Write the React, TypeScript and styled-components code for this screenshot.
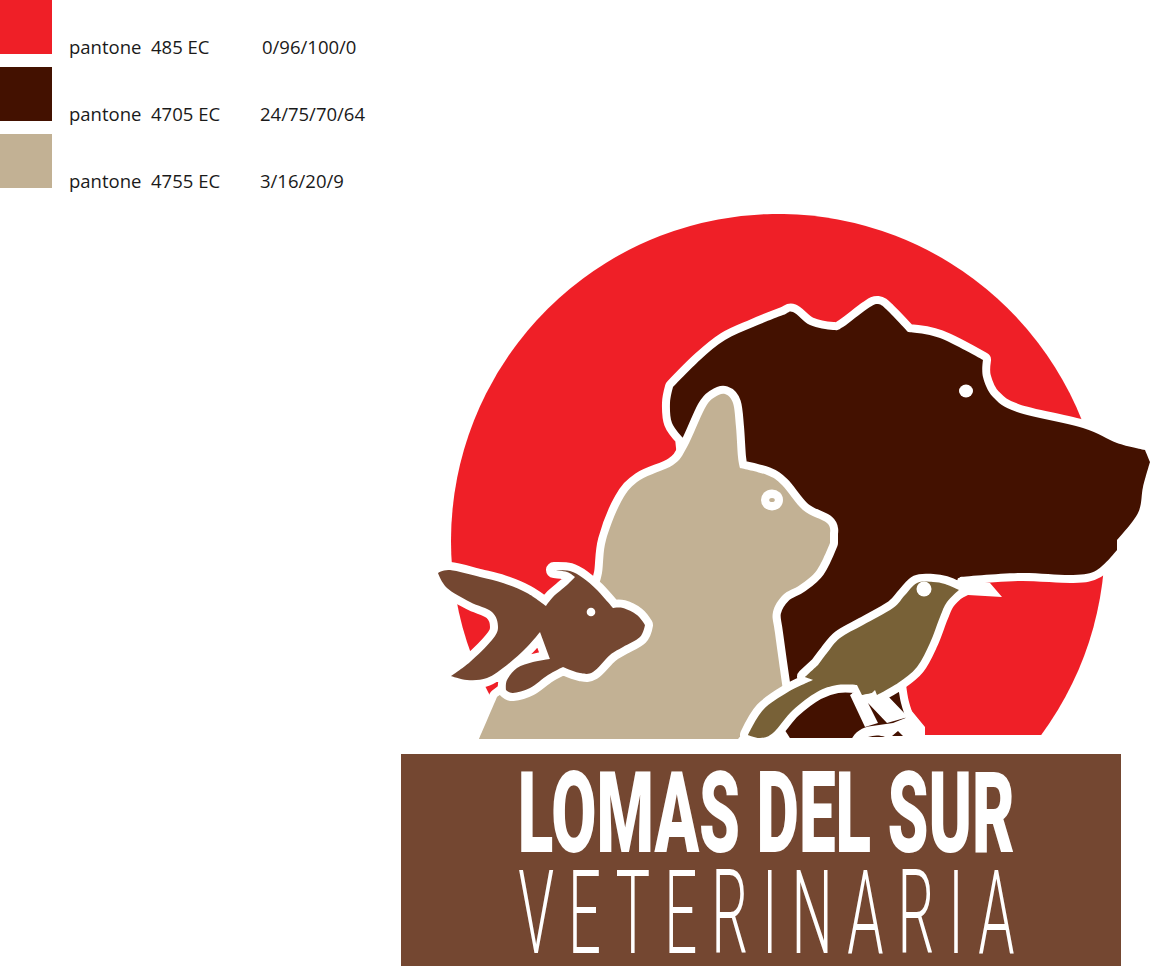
import React from 'react'
import styled, { createGlobalStyle } from 'styled-components'

const GlobalStyle = createGlobalStyle`
  html, body {
    margin: 0;
    padding: 0;
    background: #fff;
  }
`

const Page = styled.div`
  width: 1158px;
  height: 976px;
  overflow: hidden;
  display: flex;
  flex-direction: column;
  font-family: 'Open Sans', 'Noto Sans', sans-serif;
`

const Legend = styled.div`
  display: flex;
  flex-direction: column;
  gap: 13px;
`

const LegendRow = styled.div`
  display: grid;
  grid-template-columns: 52px 174px auto;
  column-gap: 17px;
  align-items: end;
  justify-content: start;
  height: 54px;
`

const Swatch = styled.div<{ $color: string }>`
  height: 54px;
  background: ${({ $color }) => $color};
`

const LegendText = styled.span<{ $indent?: number }>`
  font-size: 18.5px;
  line-height: 20px;
  color: #1a1a1a;
  white-space: pre;
  margin-bottom: -3px;
  margin-left: ${({ $indent }) => ($indent ? $indent : 0)}px;
`

const LogoArt = styled.svg`
  display: block;
  width: 757px;
  height: 526px;
  margin: 26px 0 0 401px;
  flex: none;
`

const Outlined = styled.path<{ $fill: string }>`
  fill: ${({ $fill }) => $fill};
  stroke: #fff;
  stroke-width: 16px;
  stroke-linejoin: round;
  paint-order: stroke;
`

const Banner = styled.div`
  width: 720px;
  height: 212px;
  margin: 14px 0 0 401px;
  flex: none;
  background: #744731;
  color: #fff;
  display: flex;
  flex-direction: column;
  align-items: center;
  overflow: hidden;
`

const BrandName = styled.div`
  font-family: 'Roboto', 'Liberation Sans', sans-serif;
  font-weight: 900;
  font-size: 114px;
  line-height: 82px;
  height: 82px;
  margin-top: 18px;
  white-space: nowrap;
  transform: translateX(5px) scaleX(0.575);
`

const BrandKind = styled.div`
  font-family: 'Roboto', sans-serif;
  font-weight: 300;
  font-size: 116px;
  line-height: 82px;
  height: 82px;
  margin-top: 18px;
  white-space: nowrap;
  letter-spacing: 28px;
  transform: translateX(12px) scaleX(0.5);
`

type Pt = [number, number, number?]

// smooth closed path through points, third value 1 marks a sharp corner
const trace = (pts: Pt[]) => {
  const n = pts.length
  const tan = (i: number) => {
    const p = pts[i]
    if (p[2]) return [0, 0]
    const a = pts[(i - 1 + n) % n]
    const b = pts[(i + 1) % n]
    return [(b[0] - a[0]) / 6, (b[1] - a[1]) / 6]
  }
  let d = `M${pts[0][0]},${pts[0][1]}`
  for (let i = 0; i < n; i++) {
    const j = (i + 1) % n
    const t0 = tan(i)
    const t1 = tan(j)
    d += ` C${pts[i][0] + t0[0]},${pts[i][1] + t0[1]} ${pts[j][0] - t1[0]},${pts[j][1] - t1[1]} ${pts[j][0]},${pts[j][1]}`
  }
  return d + ' Z'
}

const dog: Pt[] = [
  [683, 438, 1], [672, 423], [670, 403], [673, 387, 1], [700, 360], [725, 340], [753, 327], [783, 315],
  [793, 312], [810, 325], [833, 330], [843, 327], [867, 309], [878, 304], [888, 311], [908, 332, 1], [940, 338],
  [983, 360, 1], [983, 377], [993, 397], [1017, 412], [1083, 428], [1117, 443], [1145, 450, 1], [1150, 462, 1],
  [1143, 487], [1138, 513], [1117, 540, 1], [1117, 550, 1], [1097, 570], [1073, 575], [1020, 573],
  [960, 577, 1], [930, 620, 1], [898, 685, 1], [901, 703], [907, 722], [912, 738, 1], [790, 738, 1], [700, 600, 1],
]

const cat: Pt[] = [
  [479, 739, 1], [497, 697, 1], [560, 650, 1], [597, 590, 1], [602, 573], [606, 540], [622, 500], [640, 480],
  [673, 465], [687, 447], [705, 408], [715, 397], [725, 394], [733, 403], [736, 427], [738, 457],
  [740, 468, 1], [767, 475], [782, 485], [803, 510], [827, 523], [830, 533, 1], [830, 543, 1], [817, 570],
  [800, 585], [783, 595], [773, 612], [775, 633], [783, 690, 1], [738, 739, 1],
]

const fish: Pt[] = [
  [438, 573, 1], [450, 570], [480, 577], [503, 583], [527, 593], [546, 606, 1], [553, 597], [567, 585],
  [575, 577, 1], [567, 572], [554, 570, 1], [570, 571], [583, 578], [597, 590], [613, 608, 1], [623, 608],
  [637, 615], [645, 625, 1], [640, 637], [623, 647], [610, 655], [593, 672], [580, 673], [563, 667, 1],
  [548, 675], [530, 688], [513, 693], [506, 690, 1], [507, 680], [517, 668], [533, 662], [550, 659, 1],
  [540, 632, 1], [527, 647], [507, 665], [487, 678], [467, 680], [451, 676, 1], [470, 662], [492, 640],
  [498, 627], [492, 612], [470, 602], [447, 588],
]

const bird: Pt[] = [
  [959, 590, 1], [945, 584], [933, 582], [917, 583], [905, 595], [893, 608], [863, 625], [840, 638],
  [827, 653], [818, 665, 1], [805, 677, 1], [813, 680, 1], [788, 692], [763, 710], [748, 735, 1], [760, 738],
  [773, 733], [793, 710], [817, 692], [837, 685], [857, 685, 1], [862, 695, 1], [872, 693, 1], [875, 690, 1],
  [877, 695, 1], [898, 683], [917, 667], [930, 643], [940, 617], [947, 602],
]

const beakWedge = 'M958,578 L990,583 L1002,597 L968,595 L950,604 Z'
const legs =
  'M850,695 L865,727 L878,723 L868,703 L887,723 L908,717 L885,693 L875,688 L860,688 Z ' +
  'M851,740 C855,732 862,727 872,726 L893,723 L908,717 L911,710 L925,727 L925,740 Z'
const toes = 'M868,737 C874,735 880,735 885,737 Z M892,736 L898,731 L903,736 Z'

const Logo = () => (
  <LogoArt viewBox="401 214 757 526" role="img" aria-label="Logo">
    <path d="M514.8,735 A327,327 0 1 1 1041.2,735 Z" fill="#ef1f27" />
    <Outlined $fill="#431100" d={trace(dog)} />
    <ellipse cx="966" cy="391" rx="7" ry="6.5" fill="#fff" />
    <Outlined $fill="#c2b194" d={trace(cat)} />
    <ellipse cx="772" cy="500" rx="11" ry="10.5" fill="#fff" />
    <ellipse cx="772" cy="500" rx="2.8" ry="2" fill="#c2b194" />
    <Outlined $fill="#744731" d={trace(fish)} />
    <circle cx="591" cy="612" r="4.3" fill="#fff" />
    <path d={beakWedge} fill="#fff" />
    <path d={legs} fill="#fff" />
    <path d={toes} fill="#431100" />
    <Outlined $fill="#786137" d={trace(bird)} />
    <ellipse cx="924" cy="589" rx="7.5" ry="7.5" fill="#fff" />
  </LogoArt>
)

const colors = [
  { color: '#ef1f27', name: 'pantone  485 EC', cmyk: '0/96/100/0', indent: 2 },
  { color: '#431100', name: 'pantone  4705 EC', cmyk: '24/75/70/64', indent: 0 },
  { color: '#c2b194', name: 'pantone  4755 EC', cmyk: '3/16/20/9', indent: 0 },
]

export default function App() {
  return (
    <Page>
      <GlobalStyle />
      <Legend>
        {colors.map(c => (
          <LegendRow key={c.name}>
            <Swatch $color={c.color} />
            <LegendText>{c.name}</LegendText>
            <LegendText $indent={c.indent}>{c.cmyk}</LegendText>
          </LegendRow>
        ))}
      </Legend>
      <Logo />
      <Banner>
        <BrandName>LOMAS DEL SUR</BrandName>
        <BrandKind>VETERINARIA</BrandKind>
      </Banner>
    </Page>
  )
}
